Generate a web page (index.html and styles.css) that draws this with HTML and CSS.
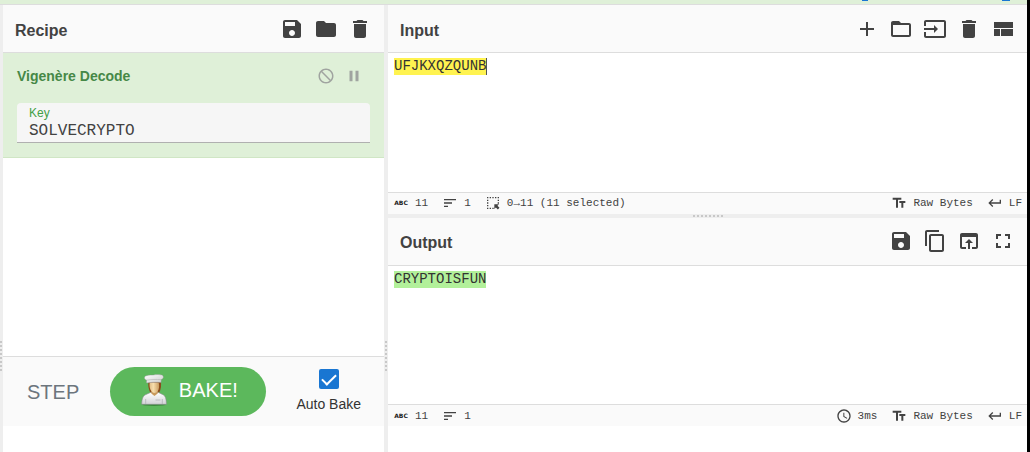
FILE: index.html
```html
<!DOCTYPE html>
<html lang="en">
<head>
  <meta charset="UTF-8" />
  <meta name="viewport" content="width=device-width, initial-scale=1.0"/>
  <link rel="stylesheet" href="styles.css">
  <title>CyberChef</title>
</head>
<body>
  <div class="banner">
    <span class="banner-icon options"></span>
    <span class="banner-icon support"></span>
  </div>

  <div class="workspace">
    <div class="gutter vertical first"></div>

    <section class="recipe">
      <div class="title">
        <h2>Recipe</h2>
        <div class="toolbar">
          <button type="button" aria-label="Save recipe"><svg viewBox="0 0 24 24"><path d="M17 3H5c-1.11 0-2 .9-2 2v14c0 1.1.89 2 2 2h14c1.1 0 2-.9 2-2V7l-4-4zm-5 16c-1.66 0-3-1.34-3-3s1.34-3 3-3 3 1.34 3 3-1.34 3-3 3zm3-10H5V5h10v4z"/></svg></button>
          <button type="button" aria-label="Load recipe"><svg viewBox="0 0 24 24"><path d="M10 4H4c-1.1 0-1.99.9-1.99 2L2 18c0 1.1.9 2 2 2h16c1.1 0 2-.9 2-2V8c0-1.1-.9-2-2-2h-8l-2-2z"/></svg></button>
          <button type="button" aria-label="Clear recipe"><svg viewBox="0 0 24 24"><path d="M6 19c0 1.1.9 2 2 2h8c1.1 0 2-.9 2-2V7H6v12zM19 4h-3.5l-1-1h-5l-1 1H5v2h14V4z"/></svg></button>
        </div>
      </div>

      <div class="operation">
        <div class="op-header">
          <h3>Vigenère Decode</h3>
          <div class="op-icons">
            <button type="button" aria-label="Disable operation"><svg viewBox="0 0 24 24"><path d="M12 2C6.48 2 2 6.48 2 12s4.48 10 10 10 10-4.48 10-10S17.52 2 12 2zm0 18c-4.42 0-8-3.58-8-8 0-1.85.63-3.55 1.69-4.9L16.9 18.31C15.55 19.37 13.85 20 12 20zm6.31-3.1L7.1 5.69C8.45 4.63 10.15 4 12 4c4.42 0 8 3.58 8 8 0 1.85-.63 3.55-1.69 4.9z"/></svg></button>
            <button type="button" aria-label="Set breakpoint"><svg viewBox="0 0 24 24"><path d="M6 19h4V5H6v14zm8-14v14h4V5h-4z"/></svg></button>
          </div>
        </div>
        <div class="field">
          <label for="key">Key</label>
          <input type="text" id="key" value="SOLVECRYPTO" spellcheck="false">
        </div>
      </div>

      <div class="controls">
        <button type="button" class="step">Step</button>
        <button type="button" class="bake">
          <svg class="chef" viewBox="0 0 26 32">
            <defs>
              <linearGradient id="hat" x1="0" x2="1" y1="0" y2="1"><stop stop-color="#fff"/><stop offset="1" stop-color="#ccc"/></linearGradient>
              <linearGradient id="face" x1="0" x2="1"><stop stop-color="#e0bd88"/><stop offset=".4" stop-color="#f8dfae"/><stop offset="1" stop-color="#c99c60"/></linearGradient>
              <linearGradient id="coat" x1="0" x2="0" y1="0" y2="1"><stop stop-color="#fff"/><stop offset="1" stop-color="#d2d2d6"/></linearGradient>
            </defs>
            <ellipse cx="13" cy="30.600" rx="12.500" ry="1.300" fill="#3c8a3c"/>
            <path d="M7.500 7h12.300c.6 4 .3 8.500-1.800 12h-8.500C7.500 15.500 6.800 11 7.500 7z" fill="#8b4b1b"/>
            <path d="M.7 30.300C.8 25 2 21.500 5 20.500l4.500-2h8l4 2c3 1 3.800 4.500 3.900 9.800z" fill="url(#coat)" stroke="#8d8f92" stroke-width=".6"/>
            <path d="M10.300 17h6.400v2.500L13.500 22l-3.200-2.500z" fill="#c99a5c"/>
            <path d="M8.700 8.500h9c.8 3.500.5 6.500-1 8.800-1.700 2.200-4.500 2.200-6.200 0-1.800-2.300-2.300-5.300-1.800-8.800z" fill="url(#face)"/>
            <path d="M4.700 25v5M21.300 25v5M14.500 26h5" fill="none" stroke="#b1b3b7" stroke-width=".8"/>
            <path d="M5.500 9V6C3 5.800 2.600 2 5.500 1.700 8 .8 10.500 1.300 12.500 1c2.500-.6 5-.6 7-.2 3-.2 4.300 3.500.8 4.700L20 8.600C15 8 10.500 8.200 5.500 9z" fill="url(#hat)" stroke="#8d8f92" stroke-width=".4"/>
            <path d="M5.500 6.200c5-.8 10-.9 14.500-.6" fill="none" stroke="#aaa" stroke-width=".5"/>
          </svg>
          <span>Bake!</span>
        </button>
        <label class="auto-bake">
          <input type="checkbox" checked>
          <span>Auto Bake</span>
        </label>
      </div>
    </section>

    <div class="gutter vertical"></div>

    <div class="io">
      <section class="pane">
        <div class="title">
          <h2>Input</h2>
          <div class="toolbar">
            <button type="button" aria-label="Add a new input tab"><svg viewBox="0 0 24 24"><path d="M19 13h-6v6h-2v-6H5v-2h6V5h2v6h6v2z"/></svg></button>
            <button type="button" aria-label="Open folder as input"><svg viewBox="0 0 24 24"><path d="M20 6h-8l-2-2H4c-1.1 0-1.99.9-1.99 2L2 18c0 1.1.9 2 2 2h16c1.1 0 2-.9 2-2V8c0-1.1-.9-2-2-2zm0 12H4V8h16v10z"/></svg></button>
            <button type="button" aria-label="Open file as input"><svg viewBox="0 0 24 24"><path d="M21 3.010H3c-1.1 0-2 .9-2 2V9h2V4.990h18v14.030H3V15H1v4.010c0 1.1.9 1.980 2 1.980h18c1.1 0 2-.88 2-1.980v-14c0-1.110-.9-2-2-2zM11 16l4-4-4-4v3H1v2h10v3z"/></svg></button>
            <button type="button" aria-label="Clear input and output"><svg viewBox="0 0 24 24"><path d="M6 19c0 1.1.9 2 2 2h8c1.1 0 2-.9 2-2V7H6v12zM19 4h-3.5l-1-1h-5l-1 1H5v2h14V4z"/></svg></button>
            <button type="button" aria-label="Reset pane layout"><svg viewBox="0 0 24 24"><path d="M3 5h19v6H3zM3 12h6v7H3zM10 12h12v7H10z"/></svg></button>
          </div>
        </div>
        <div class="editor" contenteditable="true" role="textbox" aria-label="Input" spellcheck="false"><mark class="selected">UFJKXQZQUNB</mark></div>
        <div class="status">
          <span class="stat"><span class="abc">ABC</span>11</span>
          <span class="stat"><svg viewBox="0 0 24 24"><path d="M3 18h6v-2H3v2zM3 6v2h18V6H3zm0 7h12v-2H3v2z"/></svg>1</span>
          <span class="stat"><svg viewBox="0 0 24 24"><path d="M3 3h2v2H3zM7 3h2v2H7zM11 3h2v2h-2zM15 3h2v2h-2zM19 3h2v2h-2zM3 7h2v2H3zM3 11h2v2H3zM3 15h2v2H3zM3 19h2v2H3zM7 19h2v2H7zM11 19h2v2h-2zM19 7h2v2h-2zM19 11h2v2h-2zM14 14h7l-2.300 2.300 3 3-2.400 2.400-3-3L14 21z"/></svg>0→11 (11 selected)</span>
          <button type="button" class="stat push"><svg viewBox="0 0 24 24"><path d="M2.500 4v3h5v12h3V7h5V4h-13zm19 5h-9v3h3v7h3v-7h3V9z"/></svg>Raw Bytes</button>
          <button type="button" class="stat"><svg viewBox="0 0 24 24"><path d="M19 7v4H5.830l3.580-3.590L8 6l-6 6 6 6 1.410-1.410L5.830 13H21V7z"/></svg>LF</button>
        </div>
      </section>

      <div class="gutter horizontal"></div>

      <section class="pane">
        <div class="title">
          <h2>Output</h2>
          <div class="toolbar">
            <button type="button" aria-label="Save output to file"><svg viewBox="0 0 24 24"><path d="M17 3H5c-1.11 0-2 .9-2 2v14c0 1.1.89 2 2 2h14c1.1 0 2-.9 2-2V7l-4-4zm-5 16c-1.66 0-3-1.34-3-3s1.34-3 3-3 3 1.34 3 3-1.34 3-3 3zm3-10H5V5h10v4z"/></svg></button>
            <button type="button" aria-label="Copy output"><svg viewBox="0 0 24 24"><path d="M16 1H4c-1.1 0-2 .9-2 2v14h2V3h12V1zm3 4H8c-1.1 0-2 .9-2 2v14c0 1.1.9 2 2 2h11c1.1 0 2-.9 2-2V7c0-1.1-.9-2-2-2zm0 16H8V7h11v14z"/></svg></button>
            <button type="button" aria-label="Replace input with output"><svg viewBox="0 0 24 24"><path d="M19 4H5c-1.11 0-2 .9-2 2v12c0 1.1.89 2 2 2h4v-2H5V8h14v10h-4v2h4c1.1 0 2-.9 2-2V6c0-1.1-.89-2-2-2zm-7 6l-4 4h3v6h2v-6h3l-4-4z"/></svg></button>
            <button type="button" aria-label="Maximise output pane"><svg viewBox="0 0 24 24"><path d="M7 14H5v5h5v-2H7v-3zm-2-4h2V7h3V5H5v5zm12 7h-3v2h5v-5h-2v3zM14 5v2h3v3h2V5h-5z"/></svg></button>
          </div>
        </div>
        <div class="editor" role="textbox" aria-readonly="true" aria-label="Output"><mark class="result">CRYPTOISFUN</mark></div>
        <div class="status">
          <span class="stat"><span class="abc">ABC</span>11</span>
          <span class="stat"><svg viewBox="0 0 24 24"><path d="M3 18h6v-2H3v2zM3 6v2h18V6H3zm0 7h12v-2H3v2z"/></svg>1</span>
          <span class="stat push"><svg viewBox="0 0 24 24"><path d="M12 2C6.500 2 2 6.500 2 12s4.500 10 10 10 10-4.500 10-10S17.500 2 12 2zm0 18c-4.400 0-8-3.600-8-8s3.600-8 8-8 8 3.600 8 8-3.600 8-8 8zM12.500 7H11v6l5.200 3.200.8-1.300-4.500-2.700V7z"/></svg>3ms</span>
          <button type="button" class="stat"><svg viewBox="0 0 24 24"><path d="M2.500 4v3h5v12h3V7h5V4h-13zm19 5h-9v3h3v7h3v-7h3V9z"/></svg>Raw Bytes</button>
          <button type="button" class="stat"><svg viewBox="0 0 24 24"><path d="M19 7v4H5.830l3.580-3.590L8 6l-6 6 6 6 1.410-1.410L5.830 13H21V7z"/></svg>LF</button>
        </div>
      </section>
    </div>
  </div>
</body>
</html>
```
FILE: styles.css
```css
* {
  box-sizing: border-box;
}

body {
  margin: 0;
  height: 100vh;
  display: flex;
  flex-direction: column;
  border-right: 3px solid #000;
  background-color: #fff;
  color: #424242;
  font-family: "Liberation Sans", Arial, sans-serif;
  font-size: 14px;
  overflow: hidden;
}

h2, h3 {
  margin: 0;
}

button {
  padding: 0;
  border: none;
  background: none;
  color: inherit;
  font-family: inherit;
  cursor: pointer;
}

svg {
  display: block;
  fill: currentColor;
}

.banner {
  flex: none;
  height: 5px;
  display: flex;
  justify-content: flex-end;
  gap: 134px;
  padding-right: 17px;
  background-color: #dff0d8;
  border-bottom: 1px solid #ddd;
}

/* only the bottom edge of the banner icons shows */
.banner-icon {
  width: 6px;
  height: 1px;
  background-color: #1976d2;
}

.banner-icon.support {
  width: 8px;
}

.workspace {
  flex: 1;
  min-height: 0;
  display: flex;
}

.gutter {
  flex: none;
  display: flex;
  align-items: center;
  justify-content: center;
  background-color: #eee;
}

.gutter::before {
  content: "";
}

.gutter.vertical {
  width: 4px;
  padding-bottom: 26px;
  align-items: flex-end;
}

.gutter.vertical::before {
  width: 2px;
  height: 30px;
  margin-bottom: 55px;
  background: repeating-linear-gradient(#c8c8c8 0 2px, #eee 2px 4px);
}

.gutter.first {
  width: 3px;
  justify-content: flex-start;
}

.gutter.horizontal {
  height: 4px;
}

.gutter.horizontal::before {
  width: 30px;
  height: 2px;
  background: repeating-linear-gradient(90deg, #c8c8c8 0 2px, #eee 2px 4px);
}

.recipe {
  flex: 0 0 37.1%;
  display: flex;
  flex-direction: column;
  padding-bottom: 26px;
}

.io {
  flex: 1;
  min-width: 0;
  display: flex;
  flex-direction: column;
  padding-bottom: 26px;
}

.pane {
  flex: 1;
  min-height: 0;
  display: flex;
  flex-direction: column;
}

.title {
  flex: none;
  height: 48px;
  display: flex;
  align-items: center;
  justify-content: space-between;
  padding: 0 12px;
  background-color: #fafafa;
  border-bottom: 1px solid #ddd;
}

.title h2 {
  font-size: 16px;
  line-height: 20px;
  padding-top: 4px;
}

.toolbar, .op-icons {
  display: flex;
  gap: 10px;
}

.toolbar svg {
  width: 24px;
  height: 24px;
}

/* Recipe */
.operation {
  padding: 13px 14px 14px;
  background-color: #dff0d8;
  border-bottom: 1px solid #d0e6c5;
}

.op-header {
  display: flex;
  justify-content: space-between;
  padding-right: 7px;
  margin-bottom: 17px;
  color: #468847;
}

.op-header h3 {
  font-size: 14px;
  line-height: 20px;
}

.op-icons {
  color: #a0a4a0;
}

.op-icons svg {
  width: 18px;
  height: 18px;
}

.field {
  display: flex;
  flex-direction: column;
  height: 40px;
  padding: 3px 12px 0;
  background-color: #f6f6f6;
  border-bottom: 1px solid #b0b0b0;
  border-radius: 4px 4px 0 0;
}

.field label {
  color: #43a047;
  font-size: 12px;
  line-height: 14px;
}

.field input {
  width: 100%;
  height: 22px;
  padding: 0;
  border: none;
  outline: none;
  background: none;
  color: #424242;
  font-family: "Liberation Mono", "Courier New", monospace;
  font-size: 16px;
}

.controls {
  height: 70px;
  margin-top: auto;
  display: flex;
  align-items: center;
  justify-content: space-between;
  padding: 0 23px 0 24px;
  background-color: #fafafa;
  border-top: 1px solid #ddd;
}

.step, .bake {
  font-size: 20px;
  line-height: 24px;
  text-transform: uppercase;
}

.step {
  color: #6c757d;
}

.bake {
  display: flex;
  align-items: center;
  gap: 12px;
  height: 49px;
  padding: 0 28px 3px 31px;
  border-radius: 25px;
  background-color: #5cb85c;
  color: #fff;
}

.chef {
  width: 26px;
  height: 32px;
}

.auto-bake {
  display: flex;
  flex-direction: column;
  align-items: center;
  gap: 6px;
  padding-bottom: 2px;
  color: #333;
  line-height: 18px;
}

.auto-bake input {
  appearance: none;
  display: flex;
  justify-content: center;
  width: 20px;
  height: 20px;
  margin: 0;
  border-radius: 2px;
  background-color: #1976d2;
}

.auto-bake input::after {
  content: "";
  width: 6px;
  height: 12px;
  margin-top: 2px;
  border: solid #fff;
  border-width: 0 2px 2px 0;
  transform: rotate(45deg);
}

/* Input and output */
.editor {
  flex: 1;
  min-height: 0;
  padding: 4px 6px;
  outline: none;
  overflow: auto;
  font-family: "Liberation Mono", "Courier New", monospace;
  font-size: 14px;
  line-height: 18px;
}

mark {
  display: inline-block;
  height: 17px;
  margin-top: 1px;
  line-height: 16px;
  color: #333;
}

mark.selected {
  background-color: #fff350;
  box-shadow: 1px 0 #555;
}

mark.result {
  background-color: #b2f09a;
}

.status {
  flex: none;
  height: 22px;
  display: flex;
  align-items: center;
  gap: 14px;
  padding: 0 5px;
  background-color: #fafafa;
  border-top: 1px solid #ddd;
  font-family: "Liberation Mono", "Courier New", monospace;
  font-size: 11px;
  line-height: 16px;
}

.stat {
  display: flex;
  align-items: center;
  gap: 6px;
  font-size: 11px;
}

.stat svg {
  width: 16px;
  height: 16px;
}

.stat.push {
  margin-left: auto;
}

.abc {
  width: 16px;
  text-align: center;
  color: #222;
  font-family: "DejaVu Sans", sans-serif;
  font-size: 6px;
  font-weight: bold;
}
```
